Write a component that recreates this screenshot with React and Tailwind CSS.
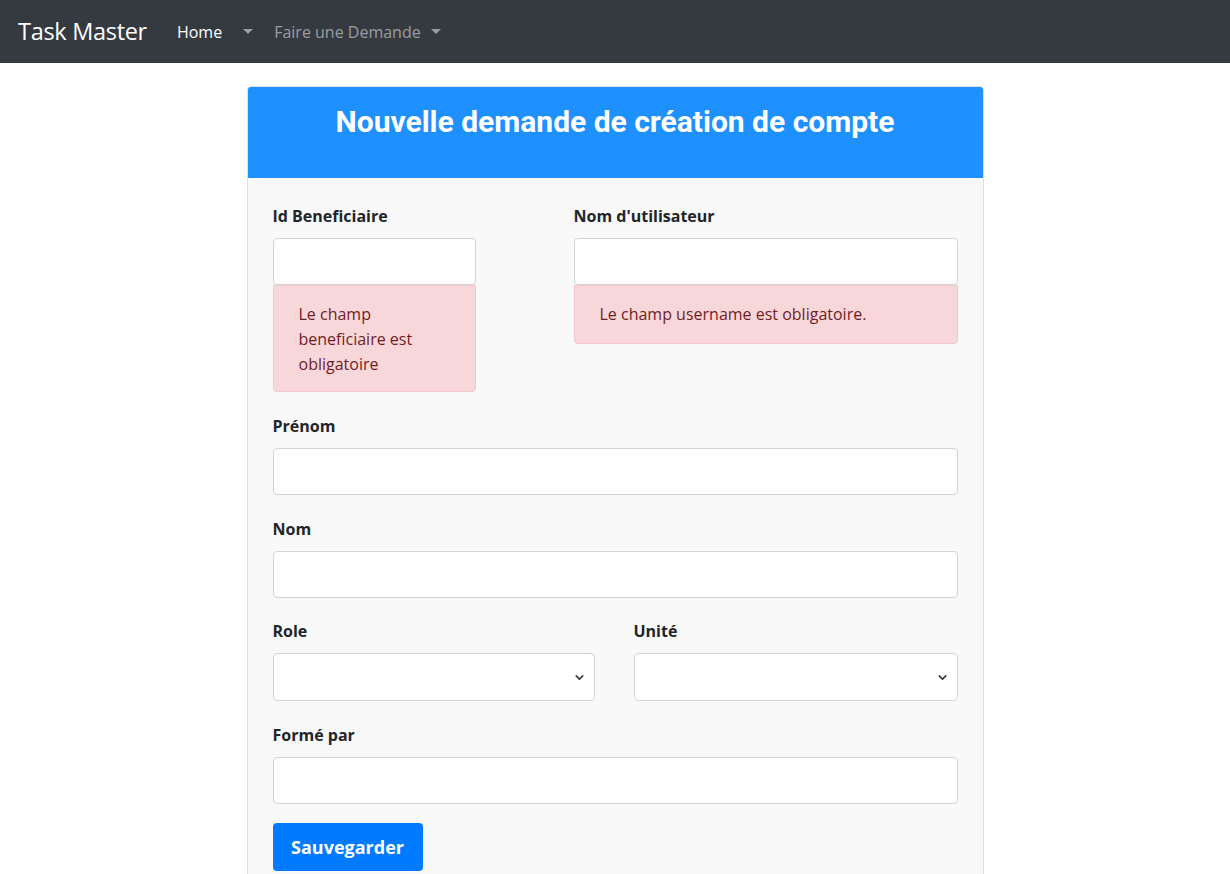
import { ChevronDown } from "lucide-react";

const FONT = { fontFamily: '"Open Sans", "Noto Sans", sans-serif' };

function Caret({ className = "" }) {
  return (
    <span
      className={`ml-[10px] inline-block h-0 w-0 border-x-[5px] border-t-[5px] border-x-transparent ${className}`}
    />
  );
}

function Label({ children }) {
  return <label className="block h-6 text-[16px] font-bold leading-6 text-[#212529] mb-[10px]">{children}</label>;
}

function TextInput() {
  return <input type="text" className="block h-[47px] w-full rounded-[4px] border border-[#ced4da] bg-white px-3" />;
}

function SelectBox() {
  return (
    <div className="relative h-[48px] w-full rounded-[4px] border border-[#ced4da] bg-white">
      <ChevronDown className="absolute right-[8px] top-[17px] h-[13px] w-[13px] text-[#343a40]" strokeWidth={3} />
    </div>
  );
}

function Alert({ children, className = "" }) {
  return (
    <div
      className={`rounded-b-[4px] border border-[#f5c6cb] bg-[#f8d7da] pl-[25px] pr-4 text-[16px] leading-[25px] text-[#721c24] ${className}`}
    >
      {children}
    </div>
  );
}

export default function App() {
  return (
    <div className="min-h-screen bg-white" style={FONT}>
      <nav className="flex h-[63px] items-center bg-[#343a40] pl-[18px]">
        <span className="text-[23.5px] text-white tracking-[-0.3px]">Task Master</span>
        <div className="ml-[30px] flex items-center text-[16px]">
          <span className="text-white">Home</span>
          <Caret className="ml-[21px] border-t-white/50" />
          <span className="ml-[21px] text-white/50">Faire une Demande</span>
          <Caret className="ml-[10px] border-t-white/50" />
        </div>
      </nav>

      <main className="flex justify-center pt-[23px]">
        <div className="w-[737px] overflow-hidden rounded-t-[4px] border border-[#dfdfdf]">
          <div className="h-[91px] bg-[#1e90ff] pt-[15px] text-center">
            <h1
              className="text-[30px] font-bold leading-[40px] text-white"
              style={{ fontFamily: "Roboto, sans-serif" }}
            >
              Nouvelle demande de création de compte
            </h1>
          </div>

          <div className="bg-[#f9f9f9] px-[25px] pt-[26px] pb-[6px]">
            <div className="flex gap-[98px]">
              <div className="w-[203px]">
                <Label>Id Beneficiaire</Label>
                <TextInput />
                <Alert className="pt-[16px] pb-[14px]">
                  Le champ beneficiaire est obligatoire
                </Alert>
              </div>
              <div className="flex-1">
                <Label>Nom d'utilisateur</Label>
                <TextInput />
                <Alert className="py-[16px]">Le champ username est obligatoire.</Alert>
              </div>
            </div>

            <div className="mt-[22px]">
              <Label>Prénom</Label>
              <TextInput />
            </div>

            <div className="mt-[22px]">
              <Label>Nom</Label>
              <TextInput />
            </div>

            <div className="mt-[21px] flex gap-[39px]">
              <div className="w-[322px]">
                <Label>Role</Label>
                <SelectBox />
              </div>
              <div className="flex-1">
                <Label>Unité</Label>
                <SelectBox />
              </div>
            </div>

            <div className="mt-[22px]">
              <Label>Formé par</Label>
              <TextInput />
            </div>

            <button className="mt-[19px] h-[48px] w-[150px] rounded-[4px] bg-[#007bff] text-[18px] font-bold text-white">
              Sauvegarder
            </button>
          </div>
        </div>
      </main>
    </div>
  );
}
